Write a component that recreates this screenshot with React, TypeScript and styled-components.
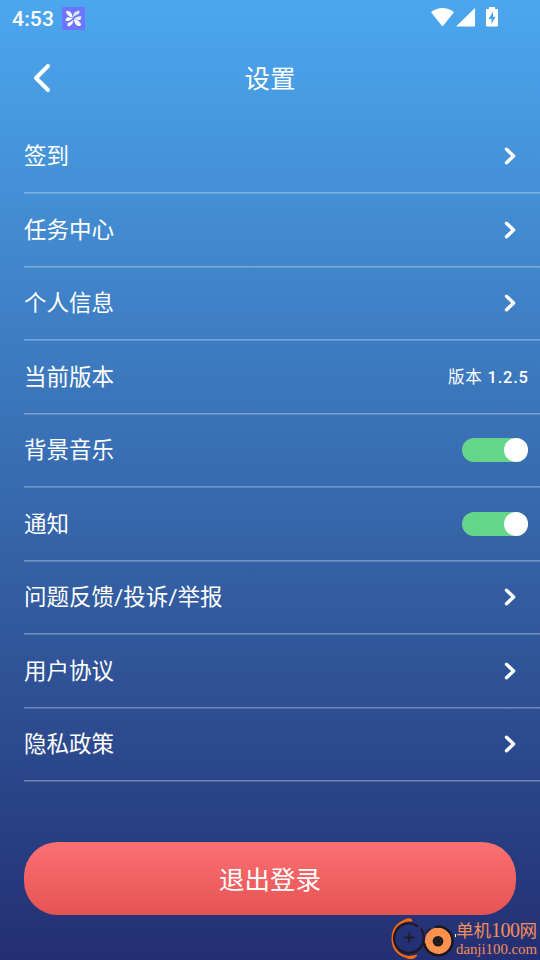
import React from 'react';
import styled, { createGlobalStyle } from 'styled-components';

const GlobalStyle = createGlobalStyle`
  * { box-sizing: border-box; }
  body { margin: 0; }
`;

const Screen = styled.div`
  position: relative;
  width: 540px;
  height: 960px;
  overflow: hidden;
  display: flex;
  flex-direction: column;
  color: #fff;
  font-family: Roboto, 'Noto Sans CJK SC', sans-serif;
  background: linear-gradient(180deg, #4ca7ee 0%, #232f72 100%);
`;

const StatusBar = styled.div`
  height: 36px;
  flex: none;
  display: flex;
  align-items: center;
  padding: 0 41px 0 12px;
`;

const Clock = styled.span`
  width: 50px;
  font-size: 21px;
  line-height: 24px;
  font-weight: 500;
  letter-spacing: 0.2px;
  padding-top: 2px;
`;

const AppBadge = styled.svg`
  display: block;
`;

const SystemIcons = styled.svg`
  display: block;
  margin-left: auto;
`;

const Header = styled.header`
  height: 84px;
  flex: none;
  display: grid;
  grid-template-columns: 84px 1fr 84px;
  align-items: center;
`;

const BackButton = styled.button`
  border: 0;
  padding: 0 0 0 30px;
  background: none;
  display: flex;
`;

const Title = styled.h1`
  margin: 0;
  padding-top: 2px;
  text-align: center;
  font-size: 25.5px;
  line-height: 36px;
  font-weight: 400;
`;

const List = styled.div`
  flex: none;
  padding-left: 24px;
`;

const Row = styled.div`
  height: 72px;
  display: flex;
  align-items: center;
  justify-content: space-between;
  padding-right: 12px;
`;

const Divider = styled.div`
  height: 2px;
  margin-bottom: -0.5px;
  background: linear-gradient(rgba(255, 255, 255, 0.31) 50%, rgba(255, 255, 255, 0.18) 50%);
`;

const Label = styled.span`
  font-size: 22.5px;
  line-height: 32px;
`;

const Version = styled.span`
  padding-top: 3px;
  font-size: 16.5px;
  line-height: 24px;
  font-weight: 500;
  letter-spacing: 0.8px;
  margin-right: -0.8px;
`;

const VersionLabel = styled.span`
  font-weight: 400;
`;

const ArrowSlot = styled.span`
  display: flex;
  padding-right: 11px;
`;

const Toggle = styled.span`
  width: 66px;
  height: 24px;
  border-radius: 12px;
  display: flex;
  justify-content: flex-end;
  background: #65d58a;
`;

const Knob = styled.span`
  width: 24px;
  height: 24px;
  border-radius: 50%;
  background: #fff;
`;

const LogoutButton = styled.button`
  flex: none;
  margin: 60px 24px 0;
  height: 73.5px;
  border: 0;
  border-radius: 34px;
  padding: 3px 0 0;
  color: #fff;
  font: 400 25.5px/36px Roboto, 'Noto Sans CJK SC', sans-serif;
  background: linear-gradient(180deg, #fb7073, #e75353);
`;

const Watermark = styled.div`
  position: absolute;
  right: 2px;
  bottom: 0;
  width: 148px;
  height: 43px;
  display: flex;
`;

const WatermarkText = styled.div`
  width: 82px;
  flex: none;
  color: #f58d58;
  font-family: 'Liberation Serif', 'Noto Sans CJK SC', serif;
  white-space: nowrap;
`;

const SiteName = styled.div`
  font-size: 17.5px;
  line-height: 22px;
  padding-top: 2px;
`;

const SiteNumber = styled.span`
  font-size: 20px;
  letter-spacing: -0.5px;
`;

const SiteUrl = styled.div`
  font-size: 14.8px;
  line-height: 15px;
`;

const Chevron = () => (
  <ArrowSlot>
    <svg width="13" height="20" viewBox="0 0 13 20" fill="none">
      <path d="M2.5 3.2L9.6 10L2.5 16.8" stroke="#fff" strokeWidth="3.4" strokeLinecap="round" strokeLinejoin="round" />
    </svg>
  </ArrowSlot>
);

const Switch = () => (
  <Toggle role="switch" aria-checked="true">
    <Knob />
  </Toggle>
);

type RowKind = 'link' | 'version' | 'switch';

const rows: { label: string; kind: RowKind }[] = [
  { label: '签到', kind: 'link' },
  { label: '任务中心', kind: 'link' },
  { label: '个人信息', kind: 'link' },
  { label: '当前版本', kind: 'version' },
  { label: '背景音乐', kind: 'switch' },
  { label: '通知', kind: 'switch' },
  { label: '问题反馈/投诉/举报', kind: 'link' },
  { label: '用户协议', kind: 'link' },
  { label: '隐私政策', kind: 'link' },
];

const Pinwheel = () => (
  <AppBadge width="23" height="23" viewBox="0 0 23 23">
    <rect width="23" height="23" fill="#6c75fb" />
    <path d="M10.7 11C7.5 10 4.7 7.8 3.8 4.6C5.3 3.5 7 3.8 8.3 5C10 6.7 10.5 8.8 10.7 11Z" fill="#fff" />
    <path d="M11.3 10.5C10.8 7.2 12.5 4.4 17 3.6C18 4.8 17.6 6.4 16.4 7.2C14.4 8 12.6 8.6 11.3 10.5Z" fill="#d9e9ff" />
    <path d="M12.2 11.7C14.5 9.6 17 8.7 19.2 9.5C19.5 11.3 18.8 12.8 17.5 13.2C15.4 13.2 13.8 12.6 12.2 11.7Z" fill="#e4efff" />
    <path d="M11.8 12.2C14.8 12.4 18 14.5 19.2 17.4C18.3 19 16.5 19.4 15 18.5C12.9 17 12.2 14.6 11.8 12.2Z" fill="#fff" />
    <path d="M11.2 12.5C11.5 15.6 10.1 18.4 6.4 19.4C5.2 18.5 5 16.8 6.4 15.8C8.3 15 10 14.3 11.2 12.5Z" fill="#fff" />
    <path d="M10.6 11.5C8.5 13.7 6 14.5 3.7 13.7C3.6 12 4.3 10.4 5.9 10.2C7.8 10.2 9.2 10.8 10.6 11.5Z" fill="#fff" />
  </AppBadge>
);

const StatusIcons = () => (
  <SystemIcons width="68" height="22" viewBox="0 0 68 22" fill="#fff">
    <path d="M0 5.2Q11.5-3 23 5.2L11.5 19.5Z" />
    <path d="M25 19.5L44 1V19.5Z" />
    <path d="M58 0H64V2H66Q67 2 67 3V18.5Q67 19.5 66 19.5H56Q55 19.5 55 18.5V3Q55 2 56 2H58Z" />
    <path d="M62 4.5L57.5 12H60.5V17L64.5 9.8H62Z" fill="#4ba3e9" />
  </SystemIcons>
);

const WatermarkLogo = () => (
  <svg width="66" height="43" viewBox="0 0 66 43" fill="none">
    <path d="M18 3C8 5 2.5 12 2.5 22C2.5 31 8 38 17 40" stroke="#ff6b05" strokeWidth="2" />
    <path d="M9 7C13 3 16 .8 19 1.2C22 1.5 23 3 22 4.8C17 3.8 12 6 9 8Z" fill="#ff6b05" />
    <path d="M9 36C14 39 20 40 26.5 37.5C28.5 38 25 41.8 22 42C17 42.5 12 39 9 36Z" fill="#ff6b05" />
    <path d="M27 8.8A14.8 14.8 0 1 0 33.7 20.5C33.7 17 33 14.5 31.5 12.5" stroke="#21192a" strokeWidth="2.4" strokeLinecap="round" />
    <path d="M40 12.5L37 15.5" stroke="#21192a" strokeWidth="2.2" strokeLinecap="round" />
    <path d="M19.3 15.5V25.5M14.3 20.5H24.3" stroke="#21192a" strokeWidth="1.8" />
    <circle cx="48.3" cy="24" r="13.4" fill="#ff914e" />
    <path d="M46 9.8A14.3 14.3 0 1 1 34.3 27" stroke="#191720" strokeWidth="2.5" strokeLinecap="round" />
    <circle cx="48" cy="24.2" r="5.3" fill="#191720" />
    <circle cx="48" cy="24.2" r="2.8" stroke="#352a2d" />
    <path d="M65.5 17v3" stroke="#fff" />
  </svg>
);

export default function App() {
  return (
    <>
      <GlobalStyle />
      <Screen>
        <StatusBar>
          <Clock>4:53</Clock>
          <Pinwheel />
          <StatusIcons />
        </StatusBar>
        <Header>
          <BackButton aria-label="返回">
            <svg width="24" height="34" viewBox="0 0 24 34" fill="none">
              <path d="M18 5L6 17L18 29" stroke="#fff" strokeWidth="4" strokeLinecap="round" strokeLinejoin="round" />
            </svg>
          </BackButton>
          <Title>设置</Title>
        </Header>
        <List>
          {rows.map(({ label, kind }) => (
            <React.Fragment key={label}>
              <Row>
                <Label>{label}</Label>
                {kind === 'link' && <Chevron />}
                {kind === 'version' && (
                  <Version>
                    <VersionLabel>版本</VersionLabel> 1.2.5
                  </Version>
                )}
                {kind === 'switch' && <Switch />}
              </Row>
              <Divider />
            </React.Fragment>
          ))}
        </List>
        <LogoutButton>退出登录</LogoutButton>
        <Watermark>
          <WatermarkLogo />
          <WatermarkText>
            <SiteName>
              单机<SiteNumber>100</SiteNumber>网
            </SiteName>
            <SiteUrl>danji100.com</SiteUrl>
          </WatermarkText>
        </Watermark>
      </Screen>
    </>
  );
}
